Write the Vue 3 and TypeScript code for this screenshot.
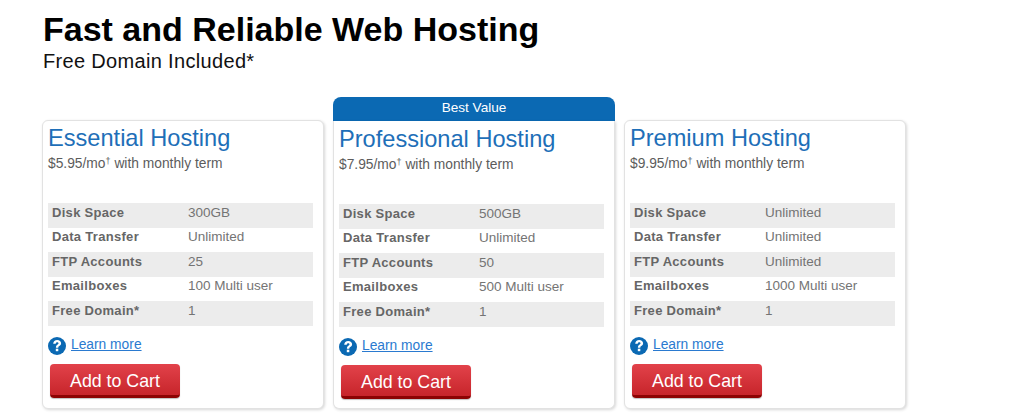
<script setup lang="ts">
interface Plan { name: string; price: string; rows: [string, string][]; best?: boolean; narrow?: boolean }
const mk = (name: string, price: string, d: string, t: string, f: string, e: string, best = false, narrow = false): Plan => ({
  name, price, best, narrow,
  rows: [['Disk Space', d], ['Data Transfer', t], ['FTP Accounts', f], ['Emailboxes', e], ['Free Domain*', '1']],
})
const plans: Plan[] = [
  mk('Essential Hosting', '$5.95', '300GB', 'Unlimited', '25', '100 Multi user'),
  mk('Professional Hosting', '$7.95', '500GB', 'Unlimited', '50', '500 Multi user', true),
  mk('Premium Hosting', '$9.95', 'Unlimited', 'Unlimited', 'Unlimited', '1000 Multi user', false, true),
]
</script>

<template>
  <div class="page">
    <h1 class="title">Fast and Reliable Web Hosting</h1>
    <p class="subtitle">Free Domain Included*</p>
    <div class="plans">
      <section v-for="p in plans" :key="p.name" class="plan" :class="{ featured: p.best, narrow: p.narrow }">
        <div v-if="p.best" class="badge">Best Value</div>
        <div class="card">
          <h2 class="name">{{ p.name }}</h2>
          <p class="price">{{ p.price }}/mo<sup>†</sup> with monthly term</p>
          <div class="specs">
            <div v-for="r in p.rows" :key="r[0]" class="row">
              <span class="label">{{ r[0] }}</span>
              <span class="value">{{ r[1] }}</span>
            </div>
          </div>
          <div class="learn">
            <svg class="help" width="18" height="18" viewBox="0 0 18 18">
              <circle cx="9" cy="9" r="9" fill="#0b69b3" />
              <path d="M5.2 6.8C5.3 4.4 6.9 3 9.2 3c2.3 0 3.9 1.3 3.9 3.2 0 1.5-.8 2.2-1.8 2.9-.8.5-1 .9-1 1.7H7.9c0-1.6.4-2.3 1.5-3 .8-.6 1.1-.9 1.1-1.5 0-.7-.5-1.1-1.3-1.1-.9 0-1.4.6-1.5 1.6z" fill="#fff" />
              <rect x="7.8" y="11.7" width="2.5" height="2.5" fill="#fff" />
            </svg>
            <a class="link" href="#">Learn more</a>
          </div>
          <button class="cart" type="button">Add to Cart</button>
        </div>
      </section>
    </div>
  </div>
</template>

<style>
html, body { margin: 0; background: #fff; overflow: hidden; }
</style>

<style scoped>
.page {
  width: 1024px;
  height: 415px;
  box-sizing: border-box;
  padding: 10px 0 0 43px;
  font-family: "Liberation Sans", Arial, sans-serif;
  overflow: hidden;
}
.title {
  margin: 0;
  font-size: 34px;
  line-height: 38px;
  font-weight: 700;
  color: #000;
}
.subtitle {
  margin: 1px 0 0;
  font-size: 20px;
  line-height: 24px;
  letter-spacing: 0.33px;
  color: #111;
}
.plans {
  display: flex;
  gap: 9px;
  margin: 47px 0 0 -1px;
  align-items: flex-start;
}
.plan { width: 282px; flex: none; }
.featured { margin-top: -23px; }
.badge {
  height: 24px;
  background: #0b69b3;
  border-radius: 8px 8px 0 0;
  color: #fff;
  font-size: 13.6px;
  line-height: 22px;
  text-align: center;
}
.card {
  box-sizing: border-box;
  height: 289px;
  border: 1px solid #e2e2e2;
  border-radius: 6px;
  box-shadow: 1px 1px 3px rgba(0, 0, 0, 0.16);
  padding: 3px 10px 0 5px;
  background: #fff;
}
.featured .card {
  border-top: none;
  border-radius: 0 0 6px 6px;
  height: 288px;
  padding-top: 4px;
}
.name {
  margin: 0;
  font-size: 23.6px;
  line-height: 28px;
  font-weight: 400;
  color: #1e6fb8;
}
.price {
  margin: 3px 0 0;
  font-size: 13.8px;
  line-height: 18px;
  color: #5c5c5c;
}
.price sup { font-size: 9px; line-height: 0; vertical-align: 4px; }
.specs { margin-top: 30px; }
.row {
  display: flex;
  box-sizing: border-box;
  height: 24.5px;
  align-items: center;
  padding: 0 0 6px 4px;
  font-size: 13px;
  color: #666;
}
.row:nth-child(odd) { background: #ececec; }
.label { width: 136px; flex: none; font-weight: 700; letter-spacing: 0.3px; }
.narrow .label { width: 131px; }
.value { font-size: 13.5px; color: #747474; }
.learn {
  display: flex;
  align-items: center;
  gap: 5px;
  margin-top: 11px;
  height: 18px;
}
.help { flex: none; }
.link { font-size: 13.8px; color: #2a7ad0; text-decoration: underline; position: relative; top: -1px; }
.cart {
  display: block;
  margin: 9px 0 0 2px;
  width: 130px;
  height: 34px;
  padding: 5px 0 0;
  border: none;
  border-bottom: 3px solid #8c0303;
  border-radius: 4px;
  background: linear-gradient(#e2424a, #c7252b);
  box-shadow: 0 1px 1px rgba(0, 0, 0, 0.25);
  color: #fff;
  font-family: inherit;
  font-size: 17.8px;
}
</style>
